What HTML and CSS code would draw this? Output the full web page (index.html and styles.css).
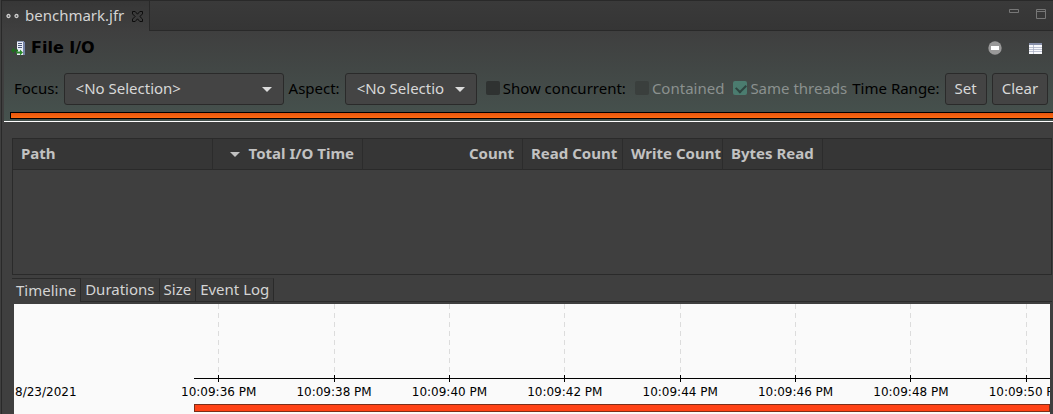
FILE: index.html
```html
<!DOCTYPE html>
<html lang="en">
<head>
    <meta charset="UTF-8">
    <meta name="viewport" content="width=device-width, initial-scale=1.0">
    <title>benchmark.jfr</title>
    <link rel="stylesheet" href="styles.css">
</head>
<body>
    <div class="editor">
        <div class="tab-bar">
            <div class="file-tab">
                <svg width="13" height="6" viewBox="0 0 13 6" fill="none" stroke="#cfcfcf" stroke-width="1.3"><circle cx="2.5" cy="3" r="1.5"/><circle cx="10.5" cy="3" r="1.5"/></svg>
                <span class="file-name">benchmark.jfr</span>
                <button class="icon-button" aria-label="Close">
                    <svg width="11" height="11" viewBox="0 0 11 11" fill="none" stroke="#0c0c0c"><path d="M.5.5h2.7l2.3 2.7L7.8.5h2.7v2.4L7.9 5.5l2.6 2.6v2.4H7.8L5.5 7.8l-2.3 2.7H.5V8.1l2.6-2.6L.5 2.9z"/></svg>
                </button>
            </div>
            <div class="window-buttons">
                <button class="icon-button" aria-label="Minimize">
                    <svg width="10" height="11" viewBox="0 0 10 11" fill="none" stroke="#777"><path d="M.5 1.5h9v3h-9z"/></svg>
                </button>
                <button class="icon-button" aria-label="Maximize">
                    <svg width="10" height="11" viewBox="0 0 10 11" fill="none" stroke="#777"><path d="M.5 1.5h9v9h-9zM.5 3.5h9"/></svg>
                </button>
            </div>
        </div>

        <div class="page-header">
            <div class="title-row">
                <svg width="15" height="16" viewBox="0 0 15 16">
                    <path d="M6 1h7v14H6z" fill="#e9edf7"/>
                    <path d="M12 2h2v13h-2z" fill="#7482a5"/>
                    <path d="M6 1h7v1H6z" fill="#8d99b5"/>
                    <path d="M7 3.5h4M7 5.5h4M7 7.5h4" stroke="#4c5878"/>
                    <path d="M0 10.5l3-3v2h4v2H3v2z" fill="#1f6b1f"/>
                    <path d="M12 12.500l-3-3v2H5v2h4v2z" fill="#2c8a2c"/>
                </svg>
                <h1>File I/O</h1>
                <div class="title-buttons">
                    <button class="icon-button" aria-label="Remove">
                        <svg width="14" height="14" viewBox="0 0 14 14"><circle cx="7" cy="7" r="6.7" fill="#999"/><path d="M3 5h8v4H3z" fill="#fff"/></svg>
                    </button>
                    <button class="icon-button" aria-label="Table settings">
                        <svg width="13" height="11" viewBox="0 0 13 11"><path d="M0 0h13v11H0z" fill="#f8f9fc"/><path d="M0 0h13v2H0z" fill="#8790aa"/><path d="M0 4.5h13M0 6.5h13M0 8.5h13M4.5 2v9" stroke="#a3abc0" stroke-width=".7"/></svg>
                    </button>
                </div>
            </div>

            <div class="filters">
                <label for="focus">Focus:</label>
                <div class="select-box focus">
                    <select id="focus"><option>&lt;No Selection&gt;</option></select>
                </div>
                <label for="aspect">Aspect:</label>
                <div class="select-box aspect">
                    <select id="aspect"><option>&lt;No Selection&gt;</option></select>
                </div>
                <label class="check"><input type="checkbox">Show concurrent:</label>
                <label class="check disabled"><input type="checkbox" disabled>Contained</label>
                <label class="check disabled"><input type="checkbox" disabled checked>Same threads</label>
                <span class="range-label">Time Range:</span>
                <button class="button">Set</button>
                <button class="button">Clear</button>
            </div>
            <div class="range-bar"></div>
        </div>

        <div class="content">
            <div class="table-box">
                <table>
                    <thead>
                        <tr>
                            <th class="path">Path</th>
                            <th class="time"><span class="sort-arrow"></span>Total I/O Time</th>
                            <th class="count">Count</th>
                            <th class="small">Read Count</th>
                            <th class="small">Write Count</th>
                            <th class="small">Bytes Read</th>
                            <th class="filler"></th>
                        </tr>
                    </thead>
                </table>
            </div>

            <div class="view-tabs">
                <button class="view-tab active">Timeline</button>
                <button class="view-tab">Durations</button>
                <button class="view-tab">Size</button>
                <button class="view-tab">Event Log</button>
            </div>

            <div class="chart">
                <div class="ticks">
                    <div class="tick">10:09:36 PM</div>
                    <div class="tick">10:09:38 PM</div>
                    <div class="tick">10:09:40 PM</div>
                    <div class="tick">10:09:42 PM</div>
                    <div class="tick">10:09:44 PM</div>
                    <div class="tick">10:09:46 PM</div>
                    <div class="tick">10:09:48 PM</div>
                    <div class="tick">10:09:50 PM</div>
                </div>
                <div class="axis"></div>
                <div class="date">8/23/2021</div>
                <div class="thread-bar"></div>
            </div>
        </div>
    </div>
</body>
</html>
```
FILE: styles.css
```css
* {
    box-sizing: border-box;
}
body {
    margin: 0;
    background: #3f3f3f;
    color: #d4d4d4;
    font-family: "Noto Sans", sans-serif;
    font-size: 15px;
    line-height: 20px;
    overflow: hidden;
}
button, select {
    font: inherit;
    color: inherit;
}
.editor {
    min-height: 100vh;
    margin-left: 1px;
    border-left: 1px solid #292929;
    border-top: 1px solid #292929;
}
.icon-button {
    display: flex;
    padding: 0;
    border: none;
    background: none;
}

/* File tab */
.tab-bar {
    display: flex;
    justify-content: space-between;
    height: 30px;
    background: linear-gradient(#3a3a3a, #353535);
    border-bottom: 1px solid #292929;
}
.file-tab {
    display: flex;
    align-items: center;
    gap: 6px;
    height: 30px;
    padding: 0 6px 0 4px;
    background: linear-gradient(#373737, #3f3f3f);
    border-right: 1px solid #292929;
}
.file-name {
    width: 101px;
    padding-bottom: 2px;
    white-space: nowrap;
}
.window-buttons {
    display: flex;
    gap: 17px;
    padding: 7px 7px 0 0;
}

/* Page header */
.page-header {
    margin-left: 2px;
    background: linear-gradient(#3f3f3f, #46524e);
    border-bottom: 1px solid #fff;
}
.title-row {
    display: flex;
    align-items: center;
    gap: 5px;
    padding: 7px 11px 0 7px;
}
.title-row h1 {
    margin: 0;
    color: #000;
    font-family: "DejaVu Sans", sans-serif;
    font-size: 16px;
}
.title-buttons {
    display: flex;
    align-items: center;
    gap: 27px;
    margin-left: auto;
}
.filters {
    display: flex;
    align-items: center;
    gap: 5px;
    padding: 15px 4px 7px 10px;
    color: #000;
    white-space: nowrap;
}
.filters label, .range-label {
    padding-bottom: 2px;
}
.select-box {
    position: relative;
    flex: none;
}
.select-box::after {
    content: "";
    position: absolute;
    right: 12px;
    top: 14px;
    border: 5px solid transparent;
    border-top-color: #dcdcdc;
    border-bottom: none;
    pointer-events: none;
}
.focus {
    width: 220px;
}
.aspect {
    width: 132px;
}
select, .button {
    height: 32px;
    background: #444;
    color: #d8d8d8;
    border: 1px solid #2a2a2a;
    border-radius: 3px;
}
select {
    display: block;
    appearance: none;
    width: 100%;
    padding: 0 31px 2px 11px;
}
.button {
    padding: 0 9px 2px;
}
.check {
    display: flex;
    align-items: center;
    gap: 3px;
    margin-left: 4px;
}
.check input {
    appearance: none;
    width: 14px;
    height: 14px;
    margin: 0;
    background: #2f3231;
    border-radius: 2px;
}
.check.disabled {
    color: #8b918f;
}
.check.disabled input {
    background: #3a3f3d;
}
.check.disabled input:checked {
    background: #4b7c6f;
}
.check input:checked::before {
    content: "";
    display: block;
    width: 8px;
    height: 5px;
    margin: 3px;
    border-left: 2px solid #2f4540;
    border-bottom: 2px solid #2f4540;
    transform: rotate(-45deg);
}
.range-bar {
    height: 7px;
    margin: 0 0 2px 6px;
    background: linear-gradient(#e4540f, #ff6a10);
    border: 1px solid #000;
    border-right: none;
}

/* Table */
.content {
    padding: 16px 1px 0 10px;
}
.table-box {
    height: 137px;
    border: 1px solid #2a2a2a;
}
table {
    width: 100%;
    table-layout: fixed;
    border-collapse: separate;
    border-spacing: 0;
}
th {
    height: 31px;
    padding: 0 8px 2px;
    background: #363636;
    color: #c2c2c2;
    border-right: 1px solid #2c2c2c;
    border-bottom: 1px solid #2a2a2a;
    text-align: right;
    white-space: nowrap;
}
.path {
    width: 200px;
    text-align: left;
}
.time {
    width: 150px;
}
.count {
    width: 160px;
}
.small {
    width: 100px;
    text-align: left;
}
.filler {
    border-right: none;
}
.sort-arrow {
    display: inline-block;
    margin-right: 9px;
    border: 5px solid transparent;
    border-top-color: #c2c2c2;
    border-bottom: none;
    vertical-align: middle;
}

/* Tabs under the table */
.view-tabs {
    display: flex;
    height: 24px;
    margin: 3px 0 2px;
    border-bottom: 1px solid #2a2a2a;
}
.view-tab {
    padding: 0 4px 2px;
    background: #3c3c3c;
    border: none;
    border-right: 1px solid #2a2a2a;
    border-top: 1px solid #383838;
}
.view-tab.active {
    height: 24px;
    background: #3f3f3f;
    border-top-color: #2a2a2a;
}

/* Timeline */
.chart {
    position: relative;
    height: 111px;
    margin: 0 2px;
    background: #fafafa;
    color: #000;
    font-family: "DejaVu Sans", sans-serif;
    font-size: 12px;
    overflow: hidden;
}
.ticks {
    display: grid;
    grid-template-columns: repeat(8, 1fr);
    margin: 0 -34px 0 147px;
}
.tick {
    text-align: center;
    white-space: nowrap;
}
.tick::before {
    content: "";
    display: block;
    width: 1px;
    height: 78px;
    margin: 0 auto;
    background: linear-gradient(transparent 71px, #000 71px), repeating-linear-gradient(#dcdcdc 0 5px, transparent 5px 9px);
}
.axis {
    position: absolute;
    left: 180px;
    right: 0;
    top: 74px;
    height: 1px;
    background: #000;
}
.date {
    position: absolute;
    left: 1px;
    top: 78px;
}
.thread-bar {
    height: 8px;
    margin: 2px 0 0 180px;
    background: #ff4216;
    border: 1px solid #7a2e1a;
}
```
